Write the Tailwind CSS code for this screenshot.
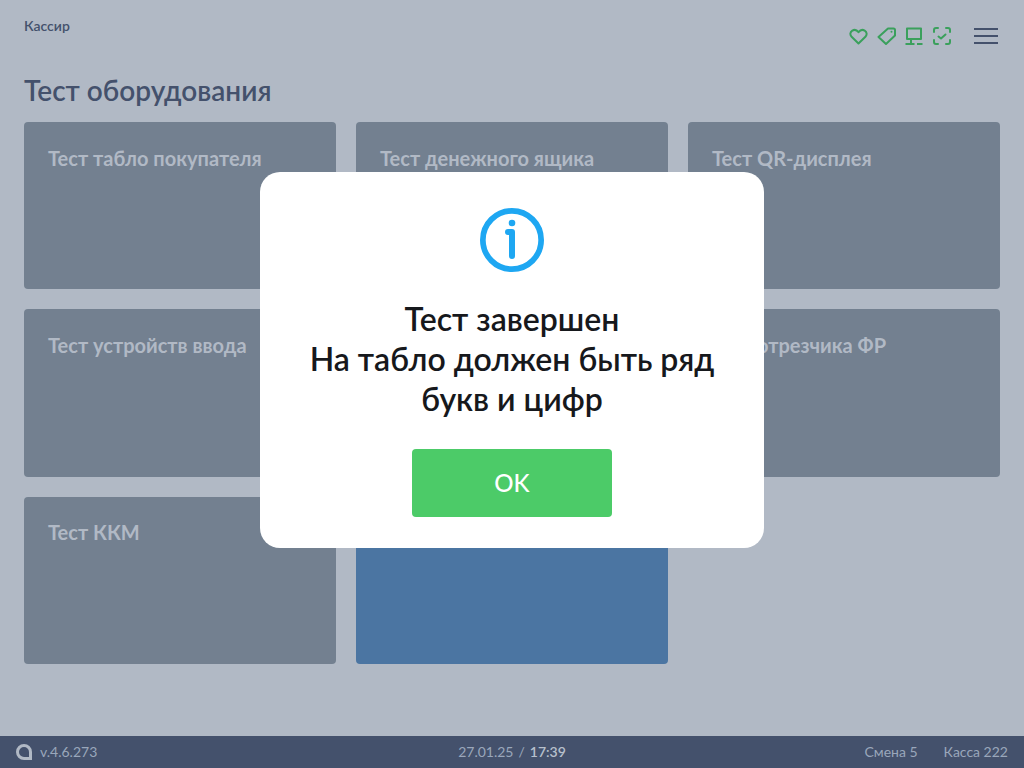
<!DOCTYPE html>
<html>
  <head>
    <meta charset="UTF-8">
    <title>Тест оборудования</title>
    <script src="https://cdn.jsdelivr.net/npm/@tailwindcss/browser@4"></script>
  </head>
  <body class="font-['Lato','Noto_Sans',sans-serif]">
    <div class="relative w-[1024px] h-[768px] overflow-hidden bg-[#b1b9c5] flex flex-col">
      <div class="h-[72px] flex justify-between pl-6 pr-[26px]">
        <div class="pt-[17px] text-sm leading-[17px] font-semibold text-[#44516c]">Кассир</div>
        <div class="flex items-center h-[18px] mt-[27px] text-[#3aa05c]">
          <svg class="w-[19px] h-[17px]" viewBox="0 0 19 17" fill="none" stroke="currentColor" stroke-width="2" stroke-linejoin="round"><path d="M9.500 15.500 2.600 8.800C.7 6.900 1.100 3.900 3.300 2.600c2.100-1.200 4.500-.6 6.200 1.600 1.700-2.200 4.100-2.800 6.200-1.600 2.200 1.300 2.600 4.300.7 6.200z"/></svg>
          <svg class="w-[19px] h-[18px] ml-[9px]" viewBox="0 0 19 18" fill="none" stroke="currentColor" stroke-width="2" stroke-linejoin="round"><path d="M11 1.500h5.500A1.500 1.500 0 0 1 18 3v5.500L9 17 1.500 10z"/><circle cx="14.500" cy="4.700" r="1" fill="currentColor" stroke="none"/></svg>
          <svg class="w-[18px] h-[18px] ml-[9px]" viewBox="0 0 18 18" fill="none" stroke="currentColor" stroke-width="2" stroke-linejoin="round"><path d="M2 1.500h14v10.500H2zM6 12v5M0.500 17h9M12 17h5.500"/></svg>
          <svg class="w-[18px] h-[18px] ml-[10px]" viewBox="0 0 18 18" fill="none" stroke="currentColor" stroke-width="2" stroke-linecap="round" stroke-linejoin="round"><path d="M5 1H3a2 2 0 0 0-2 2v2M13 1h2a2 2 0 0 1 2 2v2M5 17H3a2 2 0 0 1-2-2v-2M13 17h2a2 2 0 0 0 2-2v-2M5.500 9.500l2.500 2 4.500-4"/></svg>
          <div class="ml-[23px] w-6 flex flex-col gap-[5px]">
            <div class="h-[2px] bg-[#44516c]"></div>
            <div class="h-[2px] bg-[#44516c]"></div>
            <div class="h-[2px] bg-[#44516c]"></div>
          </div>
        </div>
      </div>
      <h1 class="px-6 h-[50px] text-[28px] leading-[36px] font-semibold text-[#44516c]">Тест оборудования</h1>
      <div class="grid grid-cols-3 gap-x-5 gap-y-[20px] px-6 auto-rows-[167.330px]">
        <div class="bg-[#738090] rounded px-6 pt-[22.500px] text-xl leading-[26px] font-bold text-[#b1b9c5]">Тест табло покупателя</div>
        <div class="bg-[#738090] rounded px-6 pt-[22.500px] text-xl leading-[26px] font-bold text-[#b1b9c5]">Тест денежного ящика</div>
        <div class="bg-[#738090] rounded px-6 pt-[22.500px] text-xl leading-[26px] font-bold text-[#b1b9c5]">Тест QR-дисплея</div>
        <div class="bg-[#738090] rounded px-6 pt-[22.500px] text-xl leading-[26px] font-bold text-[#b1b9c5]">Тест устройств ввода</div>
        <div class="bg-[#738090] rounded px-6 pt-[22.500px] text-xl leading-[26px] font-bold text-[#b1b9c5]"></div>
        <div class="bg-[#738090] rounded px-6 pt-[22.500px] text-xl leading-[26px] font-bold text-[#b1b9c5]">Тест отрезчика ФР</div>
        <div class="bg-[#738090] rounded px-6 pt-[22.500px] text-xl leading-[26px] font-bold text-[#b1b9c5]">Тест ККМ</div>
        <div class="bg-[#4b75a2] rounded"></div>
      </div>
      <div class="mt-auto h-8 bg-[#44516c] flex items-center justify-between pl-4 pr-4 text-sm text-[#9aa7bb]">
        <div class="w-[300px] flex items-center gap-2">
          <svg class="w-4 h-4" viewBox="0 0 16 16" fill="none" stroke="#b1b9c5" stroke-width="3"><path d="M8 1.500a6.500 6.500 0 1 0 0 13h6.500V8A6.500 6.500 0 0 0 8 1.500z"/></svg>
          <span>v.4.6.273</span>
        </div>
        <div class="flex gap-[5px]"><span>27.01.25</span><span>/</span><span class="font-semibold text-[#b7c0cc]">17:39</span></div>
        <div class="w-[300px] flex justify-end gap-[26px]"><span>Смена 5</span><span>Касса 222</span></div>
      </div>
      <div class="absolute left-[260px] top-[172px] w-[504px] h-[376px] bg-white rounded-[20px] flex flex-col items-center pt-9 px-12">
        <svg class="w-[64px] h-[64px]" viewBox="0 0 64 64" fill="none" stroke="#1ea7f2" stroke-linecap="round" stroke-linejoin="round"><circle cx="32" cy="32" r="29.150" stroke-width="5.700"/><path stroke-width="6" d="M28 24h4V48"/><circle cx="32" cy="15" r="3.300" fill="#1ea7f2" stroke="none"/></svg>
        <div class="mt-[27px] text-center text-[32px] leading-[40px] font-semibold text-[#16181c]">Тест завершен<br>На табло должен быть ряд букв и цифр</div>
        <button class="mt-[30px] w-[200px] h-[68px] rounded bg-[#4ccb68] text-white text-2xl font-medium">OK</button>
      </div>
    </div>
  </body>
</html>
